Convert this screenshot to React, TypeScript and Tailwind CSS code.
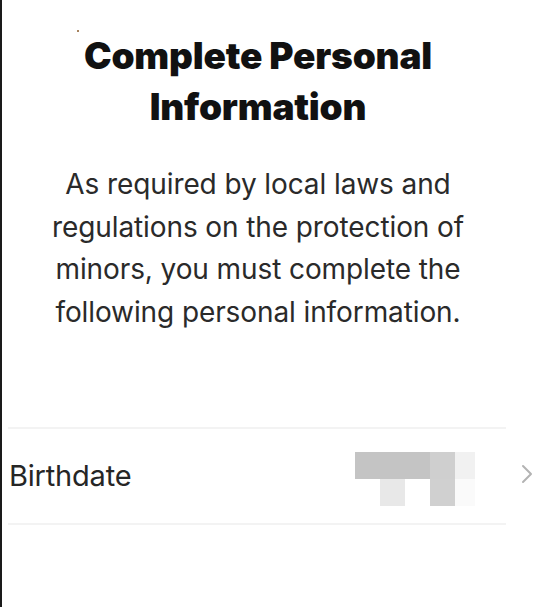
export default function App() {
  return (
    <div
      className="w-[556px] h-[607px] bg-white border-l-2 border-[#1a1a1a] overflow-hidden relative"
      style={{ fontFamily: 'Inter, "Noto Sans", sans-serif' }}
    >
      <div className="absolute left-[75px] top-[30px] w-[2px] h-[2px] rounded-full bg-[#8a5a2a]" />
      <div className="w-[512px] pt-[30px] flex flex-col items-center text-center">
        <h1 className="text-[37px] leading-[51px] font-black text-[#111] tracking-[-0.2px]">
          Complete Personal
          <br />
          Information
        </h1>
        <p className="mt-[31px] text-[28px] leading-[42.5px] text-[#2a2a2a] tracking-[-0.1px]">
          As required by local laws and
          <br />
          regulations on the protection of
          <br />
          minors, you must complete the
          <br />
          following personal information.
        </p>
      </div>
      <div className="mt-[94px] ml-[6px] w-[498px] h-[2px] bg-[#f3f3f3]" />
      <div className="h-[94px] flex items-center pl-[7px]">
        <span className="text-[29px] text-[#262626] tracking-[-0.2px]">Birthdate</span>
        <div className="ml-auto mt-[5px] flex flex-col">
          <div className="flex h-[27px]">
            <div className="w-[75px] bg-[#c4c4c4]" />
            <div className="w-[25px] bg-[#cfcfcf]" />
            <div className="w-[20px] bg-[#f1f1f1]" />
          </div>
          <div className="flex h-[27px]">
            <div className="w-[25px]" />
            <div className="w-[25px] bg-[#e8e8e8]" />
            <div className="w-[25px]" />
            <div className="w-[25px] bg-[#d0d0d0]" />
            <div className="w-[20px] bg-[#fafafa]" />
          </div>
        </div>
        <svg className="ml-[46px] mr-[23px] mb-[4px]" width="12" height="20" viewBox="0 0 12 20" fill="none">
          <path d="M2 2 L10 10 L2 18" stroke="#b3b3b3" strokeWidth="2" strokeLinecap="round" strokeLinejoin="round" />
        </svg>
      </div>
      <div className="ml-[6px] w-[498px] h-[2px] bg-[#f3f3f3]" />
    </div>
  );
}
